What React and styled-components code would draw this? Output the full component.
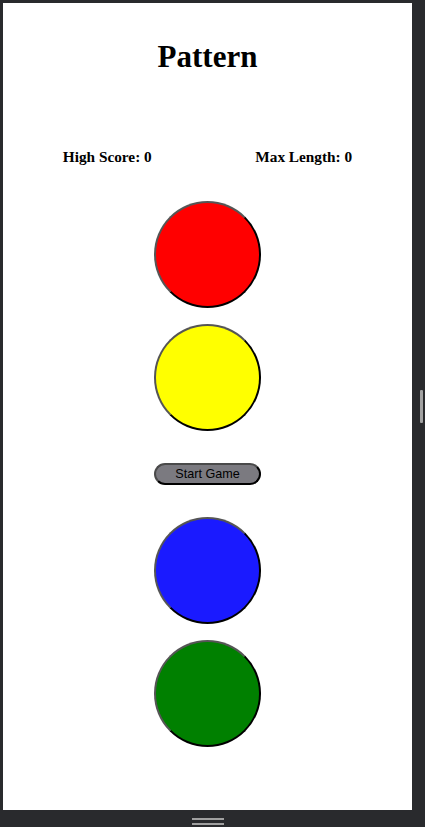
import React from "react";
import styled, { createGlobalStyle } from "styled-components";

const Global = createGlobalStyle`
  html, body { margin: 0; padding: 0; }
  body { background: #292a2d; overflow: hidden; }
`;

const Frame = styled.div`
  display: grid;
  grid-template-columns: 3px 409px 13px;
  grid-template-rows: 3px 807px 17px;
  width: 425px;
  height: 827px;
  background: #292a2d;
`;

const Viewport = styled.main`
  grid-column: 2;
  grid-row: 2;
  background: #ffffff;
  padding: 8px;
  display: flex;
  flex-direction: column;
  align-items: center;
  font-family: "Liberation Serif", "Times New Roman", serif;
  color: #000;
  overflow: hidden;
`;

const SideRail = styled.div`
  grid-column: 3;
  grid-row: 2;
  display: flex;
  align-items: center;
  padding-left: 8px;
`;

const SideGrip = styled.div`
  width: 3px;
  height: 33px;
  background: #a2a2a2;
  border-radius: 1px;
`;

const BottomRail = styled.div`
  grid-column: 2;
  grid-row: 3;
  display: flex;
  flex-direction: column;
  align-items: center;
  gap: 3px;
  padding-top: 8px;
`;

const BottomGrip = styled.div`
  width: 32px;
  height: 2px;
  background: #a0a0a0;
`;

const Title = styled.h1`
  margin: 28px 0 0;
  font-size: 31px;
  line-height: 36px;
  font-weight: bold;
  text-align: center;
`;

const Stats = styled.div`
  align-self: stretch;
  display: flex;
  justify-content: space-around;
  margin-top: 72.5px;
`;

const Stat = styled.h4`
  margin: 0;
  font-size: 15.3px;
  line-height: 18px;
  font-weight: bold;
`;

const Board = styled.div`
  display: flex;
  flex-direction: column;
  align-items: center;
  margin-top: 35.5px;
`;

const Pad = styled.div`
  width: 103px;
  height: 103px;
  border-radius: 50%;
  border: 2px solid;
  border-color: #555555 #000000 #000000 #555555;
  background: ${(p) => p.$color};
  margin-top: ${(p) => p.$gap}px;
`;

const StartButton = styled.button`
  width: 107px;
  height: 22px;
  margin: 32px 0;
  padding: 0;
  border-radius: 11px;
  border: 2px solid;
  border-color: #4a4a4a #000000 #000000 #4a4a4a;
  background: #7b7a80;
  color: #000;
  font-family: "Liberation Sans", Arial, sans-serif;
  font-size: 12.6px;
  line-height: 18px;
  cursor: pointer;
`;

export default function App() {
  return (
    <>
      <Global />
      <Frame>
        <Viewport>
          <Title>Pattern</Title>
          <Stats>
            <Stat>High Score: 0</Stat>
            <Stat>Max Length: 0</Stat>
          </Stats>
          <Board>
            <Pad $color="#ff0000" $gap={0} />
            <Pad $color="#ffff00" $gap={16} />
            <StartButton>Start Game</StartButton>
            <Pad $color="#1a1aff" $gap={0} />
            <Pad $color="#008000" $gap={16} />
          </Board>
        </Viewport>
        <SideRail>
          <SideGrip />
        </SideRail>
        <BottomRail>
          <BottomGrip />
          <BottomGrip />
        </BottomRail>
      </Frame>
    </>
  );
}
